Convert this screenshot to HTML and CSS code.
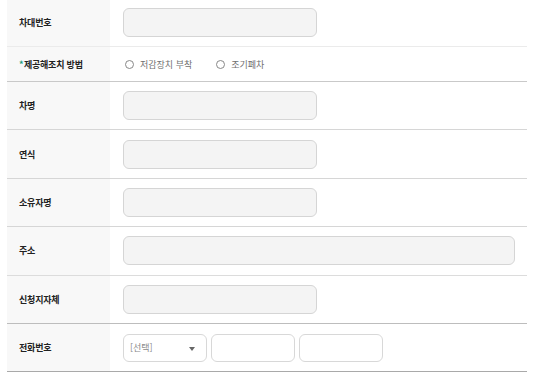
FILE: index.html
```html
<!DOCTYPE html>
<html lang="ko">
<head>
<meta charset="utf-8">
<link rel="stylesheet" href="styles.css">
</head>
<body>
<div class="form">
  <div class="row r-first">
    <div class="label">차대번호</div>
    <div class="field"><span class="input"></span></div>
  </div>
  <div class="row r-radio">
    <div class="label"><span class="req">*</span>제공해조치 방법</div>
    <div class="field radios">
      <label class="radio"><span class="circle"></span>저감장치 부착</label>
      <label class="radio"><span class="circle"></span>조기폐차</label>
    </div>
  </div>
  <div class="row">
    <div class="label">차명</div>
    <div class="field"><span class="input"></span></div>
  </div>
  <div class="row">
    <div class="label">연식</div>
    <div class="field"><span class="input"></span></div>
  </div>
  <div class="row">
    <div class="label">소유자명</div>
    <div class="field"><span class="input"></span></div>
  </div>
  <div class="row r-light">
    <div class="label">주소</div>
    <div class="field"><span class="input wide"></span></div>
  </div>
  <div class="row r-dark">
    <div class="label">신청지자체</div>
    <div class="field"><span class="input"></span></div>
  </div>
  <div class="row r-last">
    <div class="label">전화번호</div>
    <div class="field phone">
      <span class="select">[선택]<span class="caret"></span></span>
      <span class="input small"></span>
      <span class="input small"></span>
    </div>
  </div>
</div>
</body>
</html>
```
FILE: styles.css
```css
html, body {
  margin: 0;
  padding: 0;
  background: #fff;
}
body {
  font-family: "Noto Sans CJK KR", "Noto Sans", sans-serif;
}
.form {
  margin: -2px 6px 0 7px;
  width: 520px;
}
.row {
  display: flex;
  height: 47.4px;
  border-bottom: 1px solid #d6d6d6;
}
.r-first {
  height: 48px;
  border-bottom-color: #ebebeb;
}
.r-radio {
  height: 34px;
  border-bottom-color: #c9c9c9;
}
.r-light { border-bottom-color: #dcdcdc; }
.r-dark { border-bottom-color: #bdbdbd; }
.r-last { border-bottom-color: #a9a9a9; }
.label {
  width: 103px;
  flex: none;
  background: #f8f8f8;
  display: flex;
  align-items: center;
  padding-left: 12px;
  box-sizing: border-box;
  font-size: 9px;
  font-weight: 700;
  color: #222;
  letter-spacing: -0.2px;
}
.req {
  color: #1b9c7c;
  margin-right: 0.5px;
}
.field {
  flex: 1;
  display: flex;
  align-items: center;
  padding-left: 13px;
}
.input {
  display: block;
  width: 194px;
  height: 29px;
  box-sizing: border-box;
  border: 1px solid #d5d5d5;
  border-radius: 6px;
  background: #f4f4f4;
}
.input.wide { width: 392px; }
.phone { gap: 4px; }
.input.small, .select {
  width: 84px;
  height: 28px;
  background: #fff;
  border-color: #d8d8d8;
}
.select {
  box-sizing: border-box;
  border: 1px solid #d8d8d8;
  border-radius: 6px;
  display: flex;
  align-items: center;
  padding-left: 6px;
  position: relative;
  font-size: 9px;
  color: #8a8a8a;
}
.caret {
  position: absolute;
  right: 11px;
  top: 12px;
  width: 0;
  height: 0;
  border-left: 3.5px solid transparent;
  border-right: 3.5px solid transparent;
  border-top: 4px solid #666;
}
.radios { gap: 0; }
.radio {
  display: flex;
  align-items: center;
  font-size: 9px;
  color: #707070;
  margin-left: 2px;
  margin-right: 22px;
}
.circle {
  width: 9px;
  height: 9px;
  box-sizing: border-box;
  border: 1px solid #888;
  border-radius: 50%;
  margin-right: 6px;
  background: #fff;
}
```
